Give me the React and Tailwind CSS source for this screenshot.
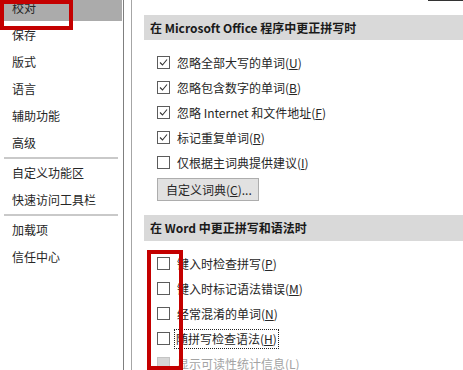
import React from "react";

function Check() {
  return (
    <svg width="11" height="11" viewBox="0 0 11 11" className="block">
      <polyline points="2,5.5 4.5,8 9,2.5" fill="none" stroke="#333" strokeWidth="1.1" />
    </svg>
  );
}

function Box({ checked, disabled }) {
  return (
    <span
      className={
        "w-[13px] h-[13px] shrink-0 flex items-center justify-center border " +
        (disabled ? "border-[#c4c4c4] bg-[#d6d6d6]" : "border-[#5c5c5c] bg-white")
      }
    >
      {checked ? <Check /> : null}
    </span>
  );
}

function Row({ checked, disabled, focus, children }) {
  return (
    <div className="h-[25px] flex items-center gap-[7px]">
      <Box checked={checked} disabled={disabled} />
      {focus ? (
        <span className="-ml-[3px] border border-dotted border-[#222] px-[1px] py-[1px] leading-[16px]">{children}</span>
      ) : (
        <span className={"leading-[16px] " + (disabled ? "text-[#a3a3a3]" : "")}>{children}</span>
      )}
    </div>
  );
}

function NavItem({ children, selected }) {
  return (
    <div className={"h-[27px] flex items-center pl-[12px] " + (selected ? "bg-[#ababab]" : "")}>{children}</div>
  );
}

function Sep() {
  return <div className="h-[3px] pt-[1px] px-[4px]"><div className="h-[2px] bg-[#c9c9c9]" /></div>;
}

export default function App() {
  return (
    <div className="relative w-[463px] h-[370px] overflow-hidden bg-white flex text-[12px] text-[#262626] font-['Noto_Sans_CJK_SC','Microsoft_YaHei',sans-serif]">
      <nav className="w-[124px] shrink-0 border-r border-[#7f7f7f]">
        <div className="-mt-[6px] pr-[1px]">
          <NavItem selected>校对</NavItem>
          <NavItem>保存</NavItem>
          <NavItem>版式</NavItem>
          <NavItem>语言</NavItem>
          <NavItem>辅助功能</NavItem>
          <NavItem>高级</NavItem>
          <Sep />
          <NavItem>自定义功能区</NavItem>
          <NavItem>快速访问工具栏</NavItem>
          <Sep />
          <NavItem>加载项</NavItem>
          <NavItem>信任中心</NavItem>
        </div>
      </nav>
      <div className="w-[7px] shrink-0" />
      <main className="flex-1 border-l border-[#a6a6a6] pl-[12px] pt-[15px]">
        <div className="h-[25px] bg-[#d9d9d9] pl-[6px] flex items-center font-bold text-[#1a1a1a]">
          在 Microsoft Office 程序中更正拼写时
        </div>
        <div className="pt-[10px] pl-[13px]">
          <Row checked>忽略全部大写的单词(<u>U</u>)</Row>
          <Row checked>忽略包含数字的单词(<u>B</u>)</Row>
          <Row checked>忽略 Internet 和文件地址(<u>F</u>)</Row>
          <Row checked>标记重复单词(<u>R</u>)</Row>
          <Row>仅根据主词典提供建议(<u>I</u>)</Row>
          <button className="mt-[3px] h-[23px] w-[102px] border border-[#adadad] bg-[#e1e1e1] pl-[8px] text-left leading-[16px]">
            自定义词典(<u>C</u>)...
          </button>
        </div>
        <div className="mt-[14px] h-[26px] bg-[#d9d9d9] pl-[6px] flex items-center font-bold text-[#1a1a1a]">
          在 Word 中更正拼写和语法时
        </div>
        <div className="pt-[10px] pl-[13px]">
          <Row>键入时检查拼写(<u>P</u>)</Row>
          <Row>键入时标记语法错误(<u>M</u>)</Row>
          <Row>经常混淆的单词(<u>N</u>)</Row>
          <Row focus>随拼写检查语法(<u>H</u>)</Row>
          <Row disabled>显示可读性统计信息(<u>L</u>)</Row>
        </div>
      </main>
      <div className="absolute top-0 right-0 w-[35px] h-[1px] bg-[#333]" />
      <div className="absolute left-0 top-0 w-[73px] h-[30px] border-[4px] border-[#c40000]" />
      <div className="absolute left-[147px] top-[250px] w-[36px] h-[120px] border-[4px] border-[#c40000]" />
    </div>
  );
}
